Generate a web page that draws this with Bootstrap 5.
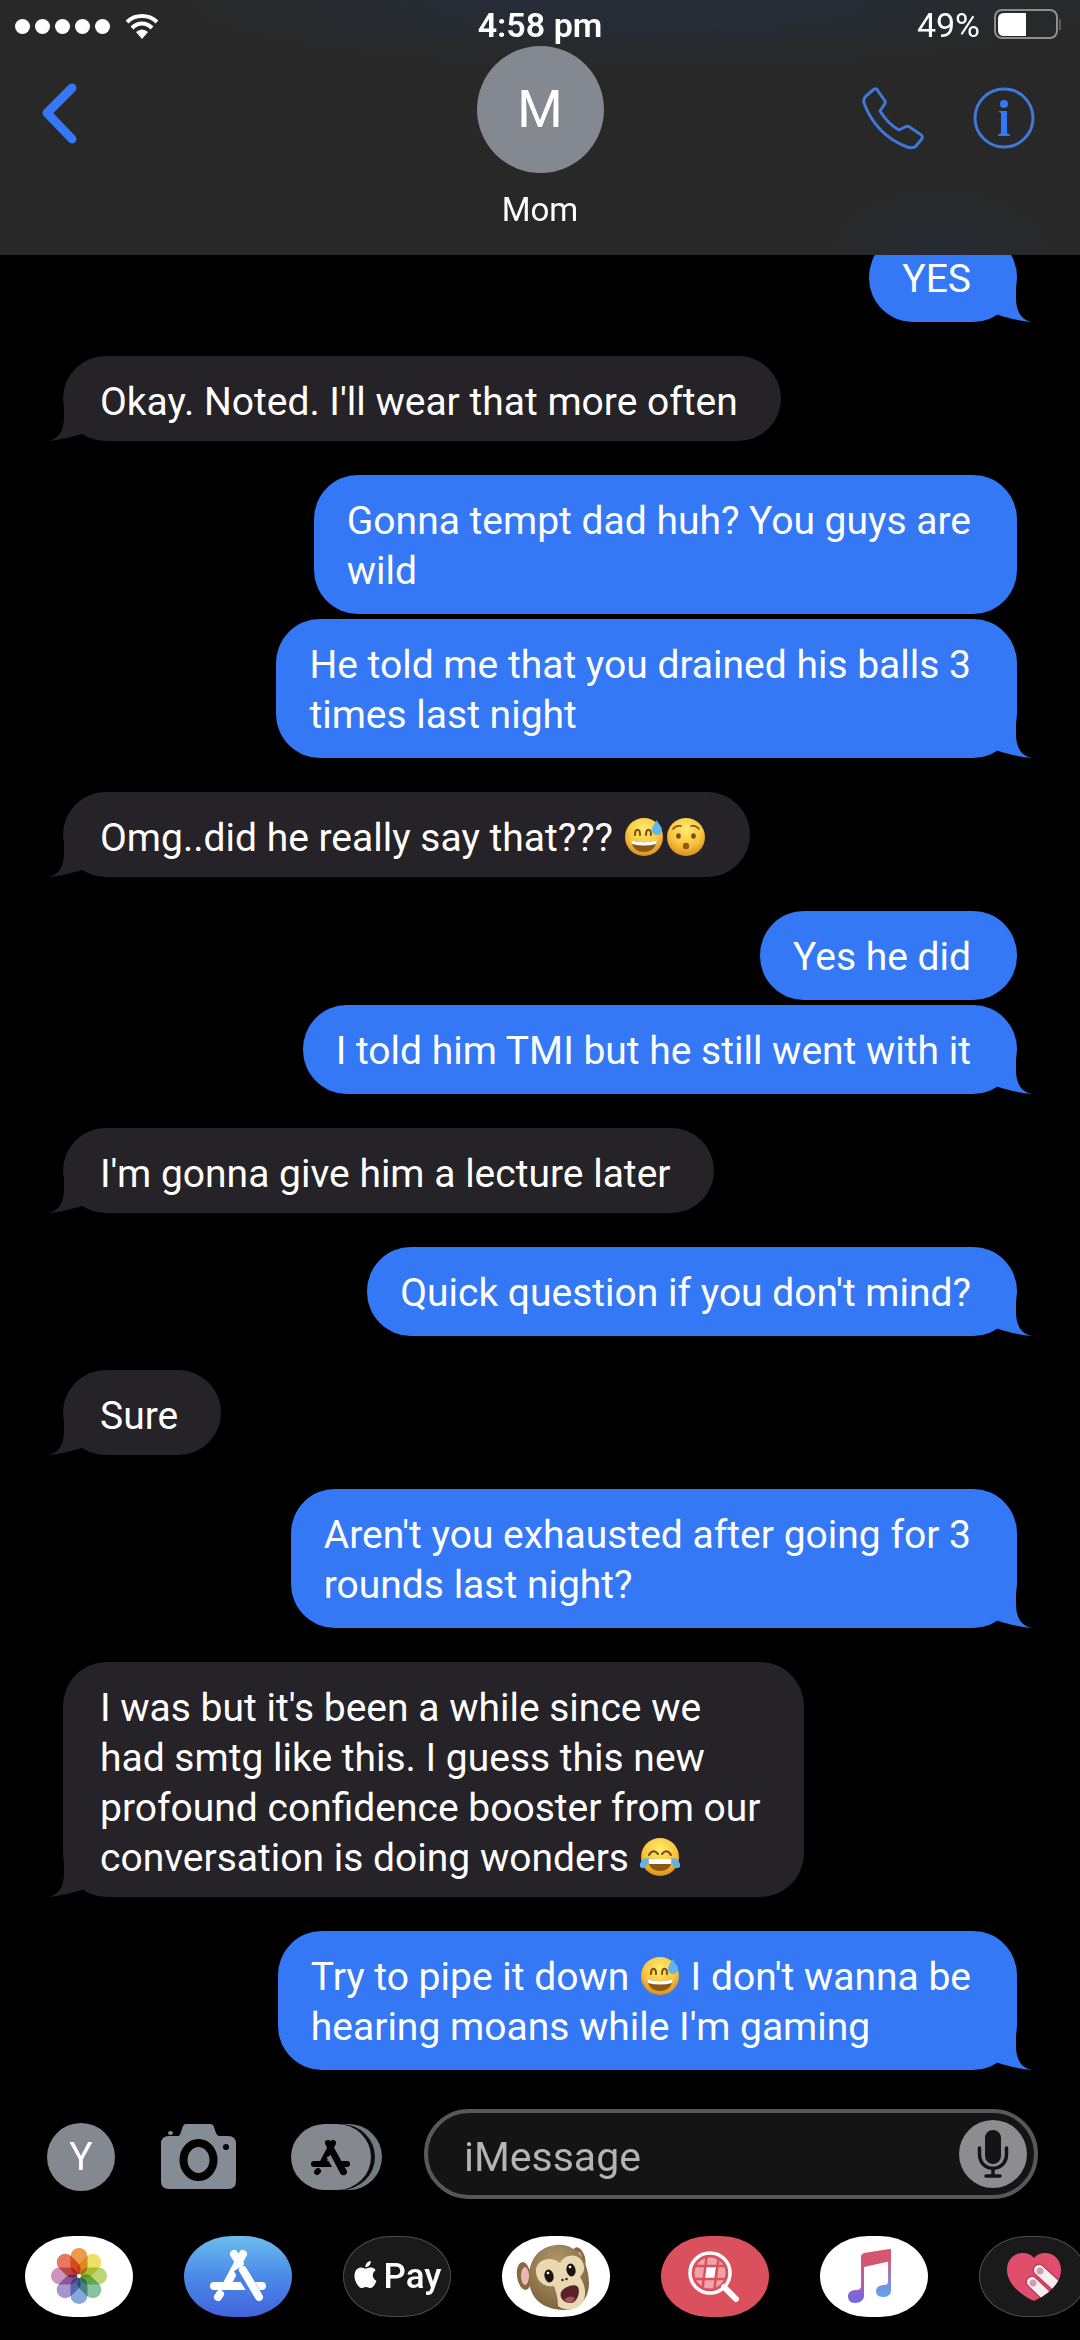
<!DOCTYPE html>
<html lang="en">
<head>
<meta charset="utf-8">
<meta name="viewport" content="width=device-width, initial-scale=1">
<title>Mom</title>
<link href="https://cdn.jsdelivr.net/npm/bootstrap@5.3.0/dist/css/bootstrap.min.css" rel="stylesheet">
<script src="https://cdn.jsdelivr.net/npm/bootstrap@5.3.0/dist/js/bootstrap.bundle.min.js"></script>
<style>
body { background: #000; color: #fff; font-family: Roboto, "Liberation Sans", sans-serif; font-size: 39px; line-height: 50px; }
svg { flex: none; }
.topbar { background: radial-gradient(ellipse 460px 66px at 60% 0, #262d37 30%, transparent), radial-gradient(ellipse 110px 66px at 87% 100%, #262b32, transparent), #282828; padding-bottom: 25px; }
.status-row { height: 46px; font-size: 34px; line-height: 34px; padding-top: 8px; }
.dots { gap: 5px; padding: 11px 0 0 15px; }
.signal-dot { width: 15px; height: 15px; background: #fff; }
.battery-side { gap: 14px; padding-right: 19px; }
.avatar-big { width: 127px; height: 127px; background: #848890; font-size: 52px; }
.contact-name { font-size: 33px; line-height: 40px; margin-top: 17px; }
.back-link { padding: 36px 0 0 40px; }
.actions { gap: 49px; padding: 41px 45px 0 0; }
.icon-btn { background: none; border: 0; padding: 0; line-height: 0; flex: none; }
.gray-disc { width: 68px; height: 68px; background: #848890; color: #fff; flex: none; }
.thread { min-height: 0; padding: 0 63px; }
.bubble { position: relative; flex: none; width: fit-content; white-space: nowrap; border-radius: 44px; margin-top: 34px; }
.bubble.follow { margin-top: 5px; }
.bubble.sent { background: #3478f6; padding: 21px 46px 18px 33px; }
.bubble.received { background: #252228; padding: 21px 43px 14px 37px; }
.tail { position: absolute; bottom: 0; width: 36px; height: 44px; }
.sent .tail { right: -15px; fill: #3478f6; }
.received .tail { left: -15px; fill: #252228; transform: scaleX(-1); }
.moji { width: 42px; height: 40px; vertical-align: -6px; }
.compose { gap: 42px; padding: 39px 42px 37px 47px; }
.tools { gap: 46px; padding-top: 6px; }
.field { height: 90px; border: 4px solid #585858; background: #141414; border-radius: 45px; padding: 0 7px 0 36px; }
.field input.form-control, .field input.form-control:focus { background: none; border: 0; box-shadow: none; color: #fff; font-size: 41px; line-height: 50px; padding: 6px 0 0; }
.field input.form-control::placeholder { color: #b4b4b4; opacity: 1; }
.app-strip { gap: 51px; padding: 0 0 23px 25px; }
.app-pill { width: 108px; height: 81px; border-radius: 50px / 42px; flex: none; overflow: hidden; border: 0; padding: 0; line-height: 0; background: #fff; }
.app-pill.dark-pill { background: #1a1a1a; box-shadow: inset 0 0 0 1px #4a4a4c; color: #fff; }
.app-pill.store-pill { background: linear-gradient(#6cbcee, #4a8ae8 50%, #4263dc); }
.app-pill.search-pill { background: #da505c; }
.pay-label { font-size: 35px; line-height: 40px; gap: 5px; }
.petals { isolation: isolate; }
.petals rect { mix-blend-mode: multiply; }
</style>
</head>
<body>
<svg width="0" height="0" class="position-absolute" aria-hidden="true">
<defs>
<radialGradient id="face" cx=".5" cy=".3" r=".72"><stop offset="0" stop-color="#ffec70"/><stop offset=".6" stop-color="#f9c43c"/><stop offset="1" stop-color="#d98a1c"/></radialGradient>
<linearGradient id="tune" x1="0" y1="0" x2="0" y2="1"><stop offset="0" stop-color="#d9506a"/><stop offset=".4" stop-color="#c25c9c"/><stop offset="1" stop-color="#6f66ea"/></linearGradient>
<linearGradient id="tuneRight" x1="0" y1="0" x2="0" y2="1"><stop offset="0" stop-color="#d9506a"/><stop offset=".35" stop-color="#c66a94"/><stop offset=".7" stop-color="#7a8fe0"/><stop offset="1" stop-color="#64a4ea"/></linearGradient>
<radialGradient id="fur" cx=".45" cy=".3" r=".75"><stop offset="0" stop-color="#b39a6c"/><stop offset="1" stop-color="#7a5f38"/></radialGradient>
<symbol id="tailShape" viewBox="0 0 36 44"><path d="M0 0H20V20C20 33 25 42 36 44C22 43 8 39 0 36Z"/></symbol>
<symbol id="sweat" viewBox="0 0 42 40"><circle cx="21" cy="20" r="19" fill="url(#face)"/><path d="M12 18c0-7 5-7 5 0M23 18c0-7 5-7 5 0" fill="none" stroke="#7a4a10" stroke-width="2" stroke-linecap="round"/><path d="M8 23c9 3 17 3 26 0c-1 8-6 12-13 12S9 31 8 23z" fill="#8a5a14"/><path d="M8 23c9 3 17 3 26 0l-1 4c-8 2-16 2-24 0z" fill="#fff"/><path d="M34 3c-2 4-5 6-5 10a5 5 0 0 0 10 0c0-4-4-6-5-10z" fill="#62b5e8"/></symbol>
<symbol id="hushed" viewBox="0 0 42 40"><circle cx="21" cy="20" r="19" fill="url(#face)"/><path d="M8 12q3-4 8-3M26 9q5-1 8 3" fill="none" stroke="#7a4a10" stroke-width="1.500" stroke-linecap="round"/><ellipse cx="13.500" cy="19" rx="2.300" ry="2.800" fill="#7a4a10"/><ellipse cx="28.500" cy="19" rx="2.300" ry="2.800" fill="#7a4a10"/><circle cx="21" cy="29" r="3.200" fill="#8a5a14"/></symbol>
<symbol id="joy" viewBox="0 0 42 40"><circle cx="21" cy="20" r="19" fill="url(#face)"/><path d="M10 18q4-7 9-1M23 17q5-6 9 1" fill="none" stroke="#7a4a10" stroke-width="2" stroke-linecap="round"/><path d="M9 22h24c0 8-5 12-12 12S9 30 9 22z" fill="#8a5a14"/><path d="M9 22h24l-1 5H10z" fill="#fff"/><path d="M10 21c-6 0-10 4-9 9c4 3 8 0 9-9zM32 21c6 0 10 4 9 9c-4 3-8 0-9-9z" fill="#5db4ea"/></symbol>
</defs>
</svg>
<div class="vh-100 d-flex flex-column overflow-hidden">
<header class="topbar flex-shrink-0">
  <div class="status-row row g-0">
    <div class="col-4 d-flex align-items-start">
      <div class="dots d-flex">
        <span class="signal-dot rounded-circle"></span><span class="signal-dot rounded-circle"></span><span class="signal-dot rounded-circle"></span><span class="signal-dot rounded-circle"></span><span class="signal-dot rounded-circle"></span>
      </div>
      <svg class="ms-3 mt-1" width="32" height="28" viewBox="0 0 32 28" fill="none" stroke="#fff" stroke-width="4" role="img" aria-label="Wi-Fi"><path d="M1 10C9 2 23 2 31 10M6 16C12 10 20 10 26 16"/><path d="M10 20q6-5 12 0l-6 7z" fill="#fff" stroke="none"/></svg>
    </div>
    <div class="col-4 text-center fw-semibold">4:58 pm</div>
    <div class="col-4 d-flex justify-content-end align-items-start battery-side"><span>49%</span>
      <svg width="67" height="32" viewBox="0 0 67 32" role="img" aria-label="Battery"><rect x="1" y="2" width="62" height="28" rx="7" fill="none" stroke="#8e8e90" stroke-width="2"/><path d="M10 5H32V28H10Q4 28 4 22V11Q4 5 10 5Z" fill="#fff"/><path d="M66 11v11" stroke="#8e8e90" stroke-width="1"/></svg>
    </div>
  </div>
  <div class="row g-0">
    <div class="col-4 back-link"><a href="#" aria-label="Back"><svg width="40" height="62" viewBox="0 0 40 62" fill="none" stroke="#3478f6" stroke-width="9" stroke-linecap="round" stroke-linejoin="round"><path d="M32 6L7 31L32 57"/></svg></a></div>
    <div class="col-4 d-flex flex-column align-items-center">
      <div class="avatar-big rounded-circle d-flex align-items-center justify-content-center">M</div>
      <div class="contact-name">Mom</div>
    </div>
    <div class="col-4 d-flex justify-content-end align-items-start actions">
      <button class="icon-btn" type="button" aria-label="Call"><svg width="62" height="62" viewBox="0 0 62 62" fill="none" stroke="#3f78d8" stroke-width="3" stroke-linejoin="round"><path d="M11 3Q14 0 16 4L23 14Q24 16 22 18L18 24Q26 37 37 43L43 40Q46 38 49 41L58 47Q62 49 59 53L54 59Q51 62 45 60Q14 48 2 16Q1 12 4 9Z"/></svg></button>
      <button class="icon-btn" type="button" aria-label="Details"><svg width="62" height="62" viewBox="0 0 62 62"><circle cx="31" cy="31" r="29" fill="none" stroke="#3f78d8" stroke-width="3"/><circle cx="31" cy="17" r="4" fill="#3478f6"/><path d="M26 24H34V46L37 48V49H25V48L28 46V26L26 25Z" fill="#3478f6"/></svg></button>
    </div>
  </div>
</header>
<main class="thread flex-grow-1 d-flex flex-column justify-content-end overflow-hidden">
  <div class="bubble sent ms-auto">YES<svg class="tail"><use href="#tailShape"/></svg></div>
  <div class="bubble received">Okay. Noted. I'll wear that more often<svg class="tail"><use href="#tailShape"/></svg></div>
  <div class="bubble sent ms-auto">Gonna tempt dad huh? You guys are<br>wild</div>
  <div class="bubble sent ms-auto follow">He told me that you drained his balls 3<br>times last night<svg class="tail"><use href="#tailShape"/></svg></div>
  <div class="bubble received">Omg..did he really say that??? <svg class="moji" role="img" aria-label="😅"><use href="#sweat"/></svg><svg class="moji" role="img" aria-label="😯"><use href="#hushed"/></svg><svg class="tail"><use href="#tailShape"/></svg></div>
  <div class="bubble sent ms-auto">Yes he did</div>
  <div class="bubble sent ms-auto follow">I told him TMI but he still went with it<svg class="tail"><use href="#tailShape"/></svg></div>
  <div class="bubble received">I'm gonna give him a lecture later<svg class="tail"><use href="#tailShape"/></svg></div>
  <div class="bubble sent ms-auto">Quick question if you don't mind?<svg class="tail"><use href="#tailShape"/></svg></div>
  <div class="bubble received">Sure<svg class="tail"><use href="#tailShape"/></svg></div>
  <div class="bubble sent ms-auto">Aren't you exhausted after going for 3<br>rounds last night?<svg class="tail"><use href="#tailShape"/></svg></div>
  <div class="bubble received">I was but it's been a while since we<br>had smtg like this. I guess this new<br>profound confidence booster from our<br>conversation is doing wonders <svg class="moji" role="img" aria-label="😂"><use href="#joy"/></svg><svg class="tail"><use href="#tailShape"/></svg></div>
  <div class="bubble sent ms-auto">Try to pipe it down <svg class="moji" role="img" aria-label="😅"><use href="#sweat"/></svg> I don't wanna be<br>hearing moans while I'm gaming<svg class="tail"><use href="#tailShape"/></svg></div>
</main>
<footer class="flex-shrink-0">
  <form class="compose d-flex align-items-center">
    <div class="tools d-flex align-items-center">
      <div class="gray-disc rounded-circle d-flex align-items-center justify-content-center">Y</div>
      <button class="icon-btn" type="button" aria-label="Camera"><svg width="84" height="66" viewBox="0 0 84 66"><path d="M8 12H17Q19 12 20 8L22 2Q23 0 25 0H49Q52 0 53 3L55 9Q56 12 58 12H67Q75 12 75 20V57Q75 65 67 65H8Q0 65 0 57V20Q0 12 8 12Z" fill="#868c95"/><ellipse cx="37.500" cy="36" rx="15" ry="17" fill="none" stroke="#000" stroke-width="8"/><circle cx="65" cy="23" r="3" fill="#000"/><ellipse cx="9.500" cy="9" rx="2.500" ry="2" fill="#868c95"/></svg></button>
      <button class="icon-btn" type="button" aria-label="Apps"><svg width="91" height="66" viewBox="0 0 91 66"><rect x="20" width="71" height="66" rx="33" fill="#737b82"/><rect x="-4" width="88" height="66" rx="34" fill="#0b0e10"/><path d="M0 0H20V66H0Z" fill="#000"/><rect width="80" height="66" rx="34" fill="#86888f"/><g fill="none" stroke="#000" stroke-width="6" stroke-linecap="round"><path d="M42 19L31 40M23 40H56M27 47L26 48M37 19L53 48"/><path d="M40 31L49 47" stroke="#86888f" stroke-width="10" stroke-linecap="butt"/><path d="M42 29L52 48"/></g></svg></button>
    </div>
    <div class="field flex-grow-1 d-flex align-items-center">
      <input class="form-control" type="text" placeholder="iMessage" aria-label="Message">
      <button class="icon-btn" type="button" aria-label="Record audio"><svg width="68" height="68" viewBox="0 0 68 68"><circle cx="34" cy="34" r="34" fill="#8c8c91"/><rect x="26" y="10" width="16" height="34" rx="8" fill="#141414"/><g fill="none" stroke="#141414" stroke-width="3.500" stroke-linecap="round"><path d="M20.500 28V34C20.500 53 47.500 53 47.500 34V28M34 49V56M27 56H41"/></g></svg></button>
    </div>
  </form>
  <nav class="app-strip d-flex overflow-hidden" aria-label="Apps">
    <button class="app-pill" type="button" aria-label="Photos"><svg width="108" height="81" viewBox="0 0 108 81"><g class="petals" transform="translate(54 40)"><rect x="-8.500" y="-28" width="17" height="27" rx="8.500" fill="#ee9a4a"/><rect x="-8.500" y="-28" width="17" height="27" rx="8.500" fill="#ece06a" transform="rotate(45)"/><rect x="-8.500" y="-28" width="17" height="27" rx="8.500" fill="#bcd673" transform="rotate(90)"/><rect x="-8.500" y="-28" width="17" height="27" rx="8.500" fill="#88c3a0" transform="rotate(135)"/><rect x="-8.500" y="-28" width="17" height="27" rx="8.500" fill="#84a8d8" transform="rotate(180)"/><rect x="-8.500" y="-28" width="17" height="27" rx="8.500" fill="#a796cc" transform="rotate(225)"/><rect x="-8.500" y="-28" width="17" height="27" rx="8.500" fill="#cf93bd" transform="rotate(270)"/><rect x="-8.500" y="-28" width="17" height="27" rx="8.500" fill="#e5785f" transform="rotate(315)"/><circle r="2" fill="#fff"/></g></svg></button>
    <button class="app-pill store-pill" type="button" aria-label="App Store"><svg width="108" height="81" viewBox="0 0 108 81" fill="none" stroke="#fff" stroke-width="8" stroke-linecap="round"><path d="M59 18L43 48M30 50H78M36 58L34 61M50 18L56 28"/><path d="M55 32L70 56" stroke="#4a80e6" stroke-width="12" stroke-linecap="butt"/><path d="M59 34L75 61"/></svg></button>
    <button class="app-pill dark-pill" type="button" aria-label="Apple Pay"><span class="pay-label d-flex align-items-center justify-content-center fw-medium"><svg class="mb-1" width="26" height="27" viewBox="2 0 21 24" fill="#fff"><path d="M12.152 6.896c-.948 0-2.415-1.078-3.960-1.040-2.040.027-3.910 1.183-4.961 3.014-2.117 3.675-.546 9.103 1.519 12.090 1.013 1.454 2.208 3.090 3.792 3.039 1.520-.065 2.090-.987 3.935-.987 1.831 0 2.350.987 3.960.948 1.637-.026 2.676-1.480 3.676-2.948 1.156-1.688 1.636-3.325 1.662-3.415-.039-.013-3.182-1.221-3.220-4.857-.026-3.040 2.480-4.494 2.597-4.559-1.429-2.090-3.623-2.324-4.390-2.376-2-.156-3.675 1.090-4.610 1.090zM15.530 3.830c.843-1.012 1.400-2.427 1.245-3.830-1.207.052-2.662.805-3.532 1.818-.780.896-1.454 2.338-1.273 3.714 1.338.104 2.715-.688 3.559-1.701"/></svg>Pay</span></button>
    <button class="app-pill" type="button" aria-label="Memoji"><svg width="108" height="81" viewBox="0 0 108 81"><ellipse cx="22" cy="40" rx="7" ry="14" fill="#87693f" transform="rotate(-8 22 40)"/><ellipse cx="23" cy="40" rx="4" ry="9" fill="#e8b9b4"/><ellipse cx="77" cy="22" rx="6" ry="11" fill="#87693f" transform="rotate(-18 77 22)"/><ellipse cx="77" cy="23" rx="3" ry="7" fill="#dbaea6"/><path d="M54 9C75 7 87 26 87 47C87 64 75 75 61 74C40 73 27 62 27 42C27 24 36 11 54 9Z" fill="url(#fur)"/><path d="M34 33C36 22 50 20 58 27C63 17 79 16 82 30Q83 35 78 41C86 53 84 66 76 71Q66 77 56 70C56 62 54 56 52 50C43 52 33 45 34 33Z" fill="#ead8b0"/><ellipse cx="47" cy="40" rx="4.500" ry="6.500" fill="#18140f" transform="rotate(-12 47 40)"/><ellipse cx="69" cy="34" rx="4.500" ry="6.500" fill="#18140f" transform="rotate(-12 69 34)"/><circle cx="46" cy="37" r="1.300" fill="#fff"/><circle cx="68" cy="31" r="1.300" fill="#fff"/><circle cx="60.500" cy="44" r="1.300" fill="#3d2c1c"/><circle cx="64.500" cy="43" r="1.300" fill="#3d2c1c"/><path d="M59 56C63 50 73 47 76 51C79 57 74 67 69 67C62 67 57 62 59 56Z" fill="#58222a"/><path d="M62 64Q67 58 73 62Q71 67 67 67Z" fill="#a2555c"/></svg></button>
    <button class="app-pill search-pill" type="button" aria-label="Image search"><svg width="108" height="81" viewBox="0 0 108 81" fill="none"><circle cx="49" cy="37" r="17" fill="#f0a4a8"/><path d="M44 30H55L53 43H42Z" fill="#fff"/><path d="M46 18L41 56M58 18L53 56M30 30H68M30 43H68" stroke="#da505c" stroke-width="2.500"/><circle cx="49" cy="37" r="17" stroke="#da505c" stroke-width="3"/><circle cx="49" cy="37" r="20" stroke="#fff" stroke-width="3.500"/><path d="M63 51L75 63" stroke="#fff" stroke-width="6" stroke-linecap="round"/></svg></button>
    <button class="app-pill" type="button" aria-label="Music"><svg width="108" height="81" viewBox="0 0 108 81"><path d="M41 20L44 18V60C44 64 40 67 35 67C30 67 28 64 28 60C28 56 32 54 36 54C39 54 41 53 41 50Z" fill="url(#tune)"/><path d="M71 13V55C71 59 67 61 63 61C58 61 56 58 56 55C56 51 60 49 64 49C67 49 68 48 68 45V15Z" fill="url(#tuneRight)"/><path d="M41 21Q41 18 44 17L69 13Q71 12 71 15V25L44 31H41Z" fill="#d5566f"/></svg></button>
    <button class="app-pill dark-pill" type="button" aria-label="Digital Touch"><svg width="108" height="81" viewBox="0 0 108 81"><path d="M55 22C48 13 28 16 28 34C28 48 42 59 55 65C68 59 82 48 82 34C82 16 62 13 55 22Z" fill="#e04e6e"/><clipPath id="heartClip"><path d="M55 22C48 13 28 16 28 34C28 48 42 59 55 65C68 59 82 48 82 34C82 16 62 13 55 22Z"/></clipPath><g clip-path="url(#heartClip)" stroke-linecap="round"><path d="M60 34L82 54M53 46L74 66" stroke="#c23a5a" stroke-width="13"/><path d="M60 34L82 54M53 46L74 66" stroke="#f4eef2" stroke-width="10"/></g><circle cx="61" cy="35" r="3.500" fill="#d59bb0"/><circle cx="54" cy="47" r="3.500" fill="#d59bb0"/></svg></button>
  </nav>
</footer>
</div>
</body>
</html>
